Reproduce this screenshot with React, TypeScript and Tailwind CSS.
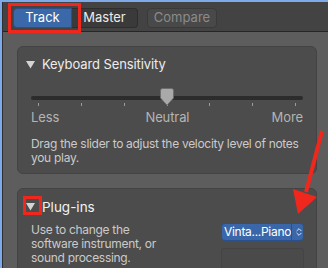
import React from 'react';
import { ChevronsUpDown } from 'lucide-react';

const Disclosure = () => (
  <svg width="9" height="8" viewBox="0 0 9 8" className="shrink-0">
    <path d="M0 0 H9 L4.5 7.5 Z" fill="#d4d4d4" />
  </svg>
);

const Thumb = () => (
  <svg width="14" height="18" viewBox="0 0 14 18">
    <path
      d="M2.5 0.5 H11.5 Q13.5 0.5 13.5 2.5 V10 L7 17.2 L0.5 10 V2.5 Q0.5 0.5 2.5 0.5 Z"
      fill="#a9a9a9"
      stroke="#6a6a6a"
      strokeWidth="0.8"
    />
  </svg>
);

const ticks = [7, 50, 93, 136, 178, 221, 264];

const Slider = () => (
  <div className="relative h-[18px] w-[272px]">
    <div className="absolute left-0 right-0 top-[8px] h-[4px] rounded-full bg-[#2c2c2c]" />
    {ticks.map((x) => (
      <div key={x} className="absolute top-[15px] h-[3px] w-px bg-[#9a9a9a]" style={{ left: x }} />
    ))}
    <div className="absolute left-[129px] top-0">
      <Thumb />
    </div>
  </div>
);

const App = () => {
  return (
    <div
      className="relative h-[268px] w-[328px] overflow-hidden bg-[#7eaaea] pl-[2px] pt-[2px]"
      style={{ fontFamily: 'Inter, "Liberation Sans", sans-serif' }}
    >
      <div className="flex h-full flex-col border-l border-[#2f2f2f] bg-[#5d5d5d]">
        {/* Toolbar */}
        <div className="flex h-[30px] shrink-0 items-start border-b border-[#262626] bg-[#434343] pl-[10px] pt-[6px]">
          <div className="flex h-[20px]">
            <div className="flex w-[59px] items-center justify-center rounded-l-[4px] border border-[#2b4f86] bg-[#3b68a8] text-[13px] text-white">
              Track
            </div>
            <div className="flex w-[66px] items-center justify-center rounded-r-[4px] border border-l-0 border-[#2e2e2e] bg-[#3a3a3a] text-[13px] text-[#ececec]">
              Master
            </div>
          </div>
          <div className="ml-[9px] flex h-[20px] w-[70px] items-center justify-center rounded-[4px] border border-[#3a3a3a] bg-[#494949] text-[13px] text-[#8b8b8b]">
            Compare
          </div>
        </div>

        {/* Content */}
        <div className="flex flex-col gap-[14px] px-[14px] pt-[14px]">
          <div className="h-[128px] w-[300px] rounded-[6px] border border-[#434343] bg-[#4c4c4c] pl-[8px] pt-[10px]">
            <div className="flex h-[16px] items-center gap-[7px]">
              <Disclosure />
              <span className="text-[13px] tracking-[-0.1px] text-[#ececec]">Keyboard Sensitivity</span>
            </div>
            <div className="mt-[15px] pl-[5px]">
              <Slider />
              <div className="mt-[4px] flex h-[16px] w-[272px] items-center justify-between text-[13px] tracking-[-0.1px] text-[#b4b4b4]">
                <span>Less</span>
                <span className="pl-[4px]">Neutral</span>
                <span>More</span>
              </div>
              <p className="mt-[11px] w-[270px] text-[12px] leading-[14px] tracking-[-0.3px] text-[#cacaca]">
                Drag the slider to adjust the velocity level of notes you play.
              </p>
            </div>
          </div>

          <div className="h-[120px] w-[300px] rounded-[6px] border border-[#434343] bg-[#4c4c4c] pl-[8px] pr-[12px] pt-[10px]">
            <div className="flex h-[16px] items-center gap-[7px]">
              <Disclosure />
              <span className="text-[13.5px] text-[#f2f2f2]">Plug-ins</span>
            </div>
            <div className="mt-[8px] flex items-start pl-[5px]">
              <p className="w-[140px] text-[12px] leading-[14px] tracking-[-0.3px] text-[#cacaca]">
                Use to change the software instrument, or sound processing.
              </p>
              <div className="ml-auto flex w-[83px] shrink-0 flex-col gap-[7px]">
                <div className="flex h-[18px] items-center overflow-hidden rounded-[4px] border border-[#2a518c] bg-[#3a67a9] text-[12px] tracking-[-0.3px] text-white">
                  <span className="flex-1 whitespace-nowrap pl-[2px]">Vinta...Piano</span>
                  <span className="flex h-full w-[15px] shrink-0 items-center justify-center border-l border-[#2a518c]">
                    <ChevronsUpDown size={10} strokeWidth={2} color="#ffffff" />
                  </span>
                </div>
                <div className="h-[40px] rounded-[3px] border border-[#444444] bg-[#4a4a4a]" />
              </div>
            </div>
          </div>
        </div>
      </div>

      {/* Annotations */}
      <div className="absolute left-[8px] top-[3px] h-[30px] w-[73px] border-[3px] border-[#f0271c]" />
      <div className="absolute left-[23px] top-[196px] h-[19px] w-[19px] border-[3px] border-[#f0271c]" />
      <svg className="absolute left-0 top-0" width="328" height="268" viewBox="0 0 328 268">
        <line x1="322" y1="131" x2="306" y2="192" stroke="#f0271c" strokeWidth="4" />
        <polygon points="293,189 317,197 298,214" fill="#f0271c" />
      </svg>
    </div>
  );
};

export default App;
